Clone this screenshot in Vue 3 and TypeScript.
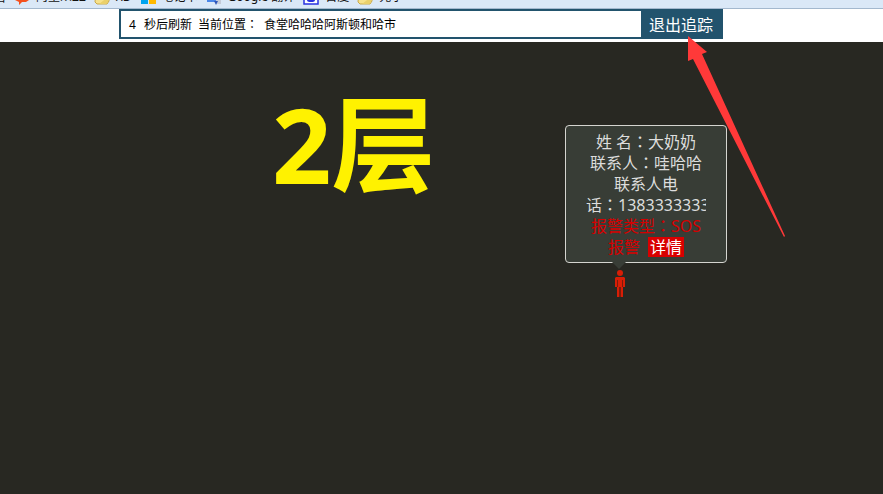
<script setup lang="ts">
import { ref } from 'vue'

interface Bookmark {
  label: string
  icon: string
}

const bookmarks: Bookmark[] = [
  { label: '阿里众ZZ', icon: 'chat' },
  { label: 'XD', icon: 'folder' },
  { label: '笔记本', icon: 'tiles' },
  { label: 'Google 翻译', icon: 'translate' },
  { label: '百度', icon: 'paw' },
  { label: '元小', icon: 'folder' },
]

const seconds = ref(4)
const place = '食堂哈哈哈阿斯顿和哈市'
const tracking = ref(true)
</script>

<template>
  <div class="page">
    <nav class="bookmarks">
      <a class="bookmark" href="#">名</a>
      <a v-for="item in bookmarks" :key="item.label" class="bookmark" href="#">
        <svg v-if="item.icon === 'chat'" class="icon" viewBox="0 0 16 16">
          <path d="M1 2h14v9l-3 2H8l-3 3v-3l-4-2z" fill="#f4511e" />
        </svg>
        <svg v-else-if="item.icon === 'folder'" class="icon" viewBox="0 0 16 16">
          <path d="M2 2h11l2 3v7l-2 3H3l-2-2z" fill="#f7e28b" stroke="#c9a94a" />
          <path d="M5 15l9-7v5l-2 2z" fill="#ead06a" />
        </svg>
        <svg v-else-if="item.icon === 'tiles'" class="icon" viewBox="0 0 16 16">
          <path d="M1 1h7v6H1zM1 8h7v7H1z" fill="#00a4ef" />
          <path d="M9 1h7v6H9zM9 8h7v7H9z" fill="#ffb900" />
        </svg>
        <svg v-else-if="item.icon === 'translate'" class="icon" viewBox="0 0 16 16">
          <path d="M1 1h10v12H1z" fill="#4a86e8" />
          <path d="M8 5h7v10h-4z" fill="#c5cbd8" />
          <path d="M8 12h4l-2 4z" fill="#3056b8" />
        </svg>
        <svg v-else class="icon" viewBox="0 0 16 16">
          <path d="M1 1h14v14H1z" fill="#fff" stroke="#2932e1" stroke-width="1.5" />
          <path d="M5 9l3-3 3 3 1 3-2 1H6l-2-1z" fill="#2932e1" />
        </svg>
        <span>{{ item.label }}</span>
      </a>
    </nav>

    <header class="toolbar">
      <div class="tracker">
        <p class="status">
          <span class="count">{{ seconds }}</span>
          <span>秒后刷新</span>
          <span>当前位置<span class="colon">：</span></span>
          <span>{{ place }}</span>
        </p>
        <button class="exit" type="button" @click="tracking = false">退出追踪</button>
      </div>
    </header>

    <main class="map">
      <h1 class="floor">2层</h1>

      <section class="marker">
        <div class="card">
          <p>姓 名<span class="colon">：</span>大奶奶</p>
          <p>联系人<span class="colon">：</span>哇哈哈</p>
          <p class="phone">联系人电<br />话<span class="colon">：</span>1383333333</p>
          <p class="alarm">报警类型<span class="colon">：</span>SOS<br />报警 <a class="detail" href="#">详情</a></p>
        </div>
        <svg class="person" viewBox="0 0 12 28">
          <circle cx="6" cy="3" r="3" />
          <path d="M2 7h8l1 1v9H9v10H7V17H5v10H3V17H1V8z" />
          <path class="shade" d="M5 17h2v10H5zM3 10h1v7H3zM8 10h1v7H8z" />
        </svg>
      </section>

      <svg class="pointer" viewBox="0 0 98 202">
        <path d="M1 0L20 16L15 18L98 200L97 201L6 23L1 25z" />
      </svg>
    </main>
  </div>
</template>

<style>
body {
  margin: 0;
  overflow: hidden;
}
</style>

<style scoped>
.page {
  display: flex;
  flex-direction: column;
  height: 100vh;
  overflow: hidden;
  background: #fff;
  font-family: "Noto Sans", "Noto Sans CJK SC", sans-serif;
}

p,
h1 {
  margin: 0;
}

.colon {
  font-family: "Noto Sans CJK TC", sans-serif;
  line-height: 1;
}

.bookmarks {
  display: flex;
  align-items: flex-end;
  gap: 8px;
  box-sizing: border-box;
  height: 9px;
  flex: none;
  overflow: hidden;
  background: #dae8f7;
  border-bottom: 1px solid #a3b8ce;
}

.bookmark {
  display: flex;
  align-items: center;
  gap: 6px;
  flex: none;
  padding-bottom: 3px;
  color: #111;
  font-size: 12px;
  line-height: 14px;
  text-decoration: none;
  white-space: nowrap;
}

.bookmark:first-child {
  margin-left: -6px;
}

.icon {
  width: 16px;
  height: 16px;
}

.toolbar {
  display: flex;
  flex: none;
  padding: 0 160px 3px 119px;
}

.tracker {
  display: flex;
  flex: 1;
  box-sizing: border-box;
  height: 30px;
  border: 2px solid #22536d;
}

.status {
  display: flex;
  flex: 1;
  align-items: center;
  gap: 6px;
  padding: 2px 0 0 8px;
  color: #000;
  font-size: 12px;
  line-height: 20px;
  white-space: nowrap;
}

.count {
  margin-right: 2px;
}

.exit {
  flex: none;
  width: 80px;
  padding: 2px 0 0;
  border: 0;
  background: #22536d;
  color: #fff;
  font-family: inherit;
  font-size: 16px;
  line-height: 24px;
}

.map {
  position: relative;
  flex: 1;
  background: #282822;
}

.floor {
  position: absolute;
  top: 30px;
  left: 272px;
  color: #fff200;
  font-family: "Open Sans", "Noto Sans CJK SC", sans-serif;
  font-size: 104px;
  font-weight: 700;
  line-height: 144px;
  white-space: nowrap;
}

.marker {
  position: absolute;
  top: 83px;
  left: 565px;
  width: 162px;
}

.card {
  position: relative;
  box-sizing: border-box;
  padding: 6px 20px 4px;
  border: 1px solid #d5d5d0;
  border-radius: 4px;
  background: #383d36;
  color: #ddd;
  font-size: 16px;
  line-height: 21px;
  text-align: center;
  white-space: nowrap;
}

.card::after {
  content: "";
  position: absolute;
  top: 100%;
  left: 46px;
  border: 7px solid transparent;
  border-top-color: #383d36;
  border-bottom: 0;
}

.phone {
  overflow: hidden;
}

.alarm {
  color: #d50000;
}

.detail {
  display: inline-block;
  margin-left: 4px;
  padding: 0 2px;
  background: #d90000;
  color: #fff;
  line-height: 20px;
  text-decoration: none;
}

.person {
  display: block;
  width: 12px;
  height: 28px;
  margin: 7px 0 0 49px;
  fill: #d81e06;
}

.shade {
  fill: #7c1c0c;
}

.pointer {
  position: absolute;
  top: -6px;
  left: 687px;
  width: 98px;
  height: 202px;
  fill: #ff3939;
  pointer-events: none;
}
</style>
